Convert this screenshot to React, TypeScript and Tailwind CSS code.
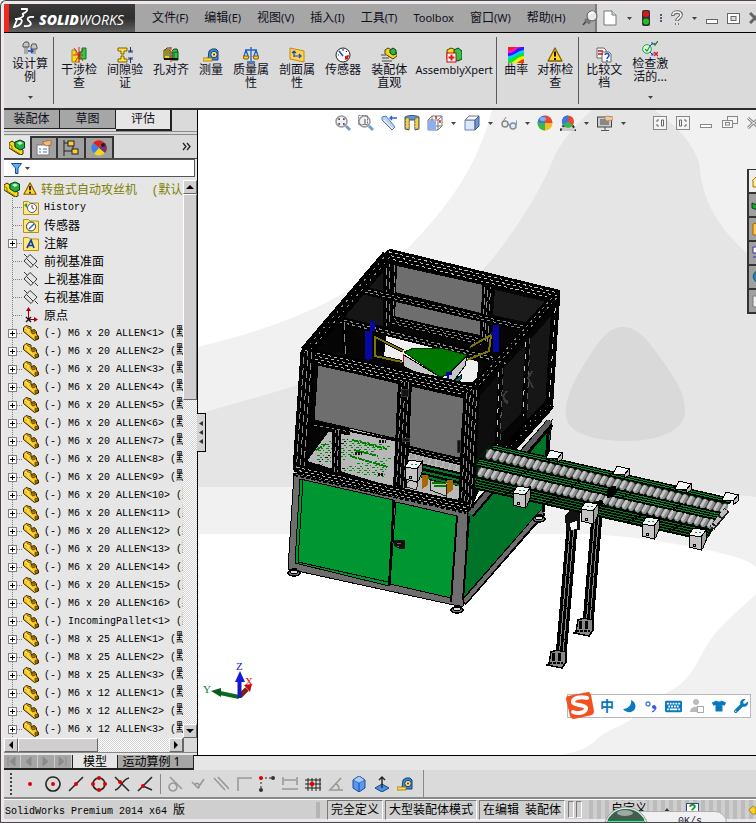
import React, { useState } from "react";
import { FaTshirt, FaWrench, FaMoon, FaKeyboard } from "react-icons/fa";

const UI_FONT = "font-['Noto_Sans','Noto_Sans_CJK_SC',sans-serif]";
const TREE_FONT = "font-['Liberation_Mono','Noto_Sans_CJK_SC',monospace]";

type Pt = [number, number];

const MENUS: [string, string][] = [
  ["文件", "(F)"],
  ["编辑", "(E)"],
  ["视图", "(V)"],
  ["插入", "(I)"],
  ["工具", "(T)"],
  ["", "Toolbox"],
  ["窗口", "(W)"],
  ["帮助", "(H)"],
];

const M6 = Array.from({ length: 16 }, (_, i) => `M6 x 20 ALLEN<${i + 1}>`);
const PARTS = [
  ...M6,
  "IncomingPallet<1>",
  "M8 x 25 ALLEN<1>",
  "M8 x 25 ALLEN<2>",
  "M8 x 25 ALLEN<3>",
  "M6 x 12 ALLEN<1>",
  "M6 x 12 ALLEN<2>",
  "M6 x 12 ALLEN<3>",
];

/* ---------- icons ---------- */

function Ico({ children, size = "size-4", box = "0 0 16 16" }: { children: React.ReactNode; size?: string; box?: string }) {
  return (
    <svg viewBox={box} className={`${size} shrink-0`} fill="none" aria-hidden="true">
      {children}
    </svg>
  );
}

const Caret = () => (
  <svg viewBox="0 0 5 3" className="h-[3px] w-[5px] shrink-0" fill="#444">
    <path d="M0 0H5L2.5 3Z" />
  </svg>
);

const BoltsIcon = () => (
  <Ico>
    <path d="M3 6V13M5 6V13M11 7V13M13 7V13" stroke="#777" />
    <path d="M1 3L3 1H6L7 3V6H1ZM9 6L10 3H14L15 6V8H9Z" fill="#c4c4c4" stroke="#555" />
    <path d="M6 10H11M9 8L11 10L9 12" stroke="#1646c8" strokeWidth="1.3" />
  </Ico>
);
const InterferenceIcon = () => (
  <Ico>
    <path d="M1 3H5V7H8V15H1Z" fill="#f7dc24" stroke="#a08a10" />
    <path d="M15 1H11V5H8V12H15Z" fill="#2fc64a" stroke="#0b7a20" />
    <path d="M3 1L12 14M12 2L4 15M8 0V16M2 8H12" stroke="#e01616" strokeWidth=".9" />
  </Ico>
);
const ClearanceIcon = () => (
  <Ico>
    <path d="M1 1H10V4H7V7H4V4H1ZM4 9H7V12H10V15H1V12H4Z" fill="#ffe14a" stroke="#7a6200" />
    <path d="M11 5H16M11 11H16M13.500 0V5M11.500 3L13.500 5L15.500 3M13.500 16V11M11.500 13L13.500 11L15.500 13" stroke="#15367f" />
  </Ico>
);
const HoleIcon = () => (
  <Ico>
    <path d="M1 3H7V12H1ZM2 3L4 1H8" fill="#e8d22a" stroke="#4a4200" />
    <path d="M9 5H15V13H9ZM9 4L11 2H14L15 5" fill="#31c240" stroke="#084d14" />
    <path d="M3 4V9M5 4V9M11 6V11" stroke="#444" />
    <path d="M8 0V16" stroke="#e01616" strokeDasharray="3 1" />
    <path d="M1 12H15" stroke="#111" strokeWidth="2" />
  </Ico>
);
const MeasureIcon = () => (
  <Ico>
    <path d="M5 12L6 4L9 2H13L15 4V13H5Z" fill="#3f88d8" stroke="#143e7a" />
    <circle cx="11" cy="7.500" r="3.200" fill="#ffe36b" stroke="#143e7a" />
    <circle cx="11" cy="7.500" r="1" fill="#143e7a" />
    <path d="M0 11H9V14H0Z" fill="#ffd83d" stroke="#8a6c00" strokeWidth=".7" />
  </Ico>
);
const MassIcon = () => (
  <Ico>
    <path d="M8 0V14M2 3H14M4 15H12M3 3L1 9M3 3L5 9M13 3L11 9M13 3L15 9" stroke="#1c62c4" strokeWidth="1.300" />
    <path d="M0 9H6L5 12H1ZM10 9H16L15 12H11Z" fill="#ffc928" stroke="#8a5a00" />
  </Ico>
);
const SectionIcon = () => (
  <Ico>
    <path d="M1 1L15 4V15L1 12Z" fill="#ffd34e" stroke="#c08a10" />
    <path d="M5 10V4M3 6L5 4L7 6M5 9H12M10 7L12 9L10 11" stroke="#1646c8" strokeWidth="1.200" />
  </Ico>
);
const SensorIcon = () => (
  <Ico>
    <circle cx="8" cy="8" r="7" fill="#fff" stroke="#222" />
    <path d="M8 9L4 4" stroke="#1646c8" strokeWidth="1.500" />
    <path d="M3 8H4M8 2V4M12 4L11 5" stroke="#222" />
    <path d="M10 9L14 8L13 12L10 13Z" fill="#e01616" />
  </Ico>
);
const AssemblyIcon = () => (
  <Ico>
    <path d="M0 4L3 2L6 4V7L14 11V15L11 16L0 9Z" fill="#f8d820" stroke="#3a3000" />
    <path d="M0 5L3 7V10M3 10L11 15" stroke="#8a7000" />
    <path d="M6 3L11 1L15.500 3V9L11 11L6 8Z" fill="#20b040" stroke="#063f12" />
    <path d="M8 4L11 2.500L14 4L11 6Z" fill="#c8f8d0" />
  </Ico>
);
const VisualizeIcon = () => (
  <Ico>
    <path d="M4 3L7 1L16 6V9L12 12L4 7Z" fill="#f3d322" stroke="#4a4000" />
    <path d="M9 3L12 1L15 3V7L12 8L9 6Z" fill="#2fb64a" stroke="#063f12" />
    <path d="M0 8H5M1 11H8M1 14H11" stroke="#777" strokeWidth="1.500" />
  </Ico>
);
const XpertIcon = () => (
  <Ico>
    <path d="M1 3L5 1L10 3V12H1Z" fill="#f8d820" stroke="#4a4000" />
    <path d="M8 3L12 1L16 4V12L12 14L8 12Z" fill="#2fc64a" stroke="#063f12" />
    <rect x="1" y="6" width="9" height="9" fill="#fff" stroke="#c00" />
    <path d="M5.500 7.500V13.500M2.500 10.500H8.500" stroke="#e01616" strokeWidth="2" />
  </Ico>
);
const CurvatureIcon = () => (
  <Ico>
    <path d="M0 0H16V16H0Z" fill="#f02020" />
    <path d="M0 3C5 4 6 0 11 0H16V16H0Z" fill="#ff10c8" />
    <path d="M0 6C6 7 7 1 14 0H16V16H0Z" fill="#3818ff" />
    <path d="M0 9C6 9 9 4 16 3V16H0Z" fill="#00d0ff" />
    <path d="M0 12C7 11 9 7 16 6V16H0Z" fill="#10e030" />
    <path d="M3 16C8 13 10 10 16 9V16Z" fill="#f8f000" />
    <path d="M9 16C11 14 13 13 16 12V16Z" fill="#ff3010" />
  </Ico>
);
const WarnIcon = ({ size }: { size?: string }) => (
  <Ico size={size}>
    <path d="M8 1L15 14H1Z" fill="#ffd62e" stroke="#8a5c00" strokeWidth="1.300" strokeLinejoin="round" />
    <path d="M8 4.500V9.500M8 11V13" stroke="#111" strokeWidth="2" />
  </Ico>
);
const CompareIcon = () => (
  <Ico>
    <path d="M1 1H8L10 3V11H1Z" fill="#fff" stroke="#666" />
    <path d="M6 5H13L15 7V15H6Z" fill="#fff" stroke="#666" />
    <path d="M2 4H7M2 7H7" stroke="#d01010" strokeWidth="1.500" />
    <path d="M9 8C9 6 13 6 13 8.500C13 10 11 10 11 12M11 13V14.500" stroke="#1646c8" strokeWidth="1.500" />
  </Ico>
);
const CheckActiveIcon = () => (
  <Ico>
    <circle cx="5" cy="8" r="4.300" fill="#e8ffe8" stroke="#18a038" />
    <path d="M3 8L5 10L8 5" stroke="#18a038" strokeWidth="1.300" />
    <path d="M8 5L11 2M9 2H11V4M8 11L11 14M9 14H11V12" stroke="#1646c8" />
    <path d="M12 2L13 4L16 0" stroke="#18801c" strokeWidth="1.300" />
    <path d="M12 11L16 15M16 11L12 15" stroke="#e01616" strokeWidth="1.300" />
  </Ico>
);
const PartIcon = () => (
  <Ico>
    <path d="M.5 3L3 .5L8 2V5.500L11.500 4.500L13.500 7V9L15.500 11.500V14L11.500 15.500L.5 6.500Z" fill="#f8c41a" stroke="#2e2200" strokeLinejoin="round" />
    <path d="M8 6.500L11.500 5.500L12.500 8L9.500 9ZM12 11.500L15 11V13.500L12 14.500Z" fill="#b87400" stroke="#3a2600" strokeWidth=".6" />
    <path d="M2 3L5 4V7.500L11 12" stroke="#fff08a" />
    <path d="M4 2.500L7 3.500" stroke="#8a5a00" />
  </Ico>
);
const FolderIcon = ({ children }: { children: React.ReactNode }) => (
  <Ico>
    <path d="M.5 2.500H5.500L7 4H15.500V15.500H.5Z" fill="#ffe97a" stroke="#b89018" />
    {children}
  </Ico>
);
const PlaneIcon = () => (
  <Ico>
    <path d="M1 8L7 1.500L14 8L8 14.500ZM4 6L10 12M1 1L4 4M12 12L15 15" stroke="#222" strokeWidth=".9" />
  </Ico>
);
const OriginIcon = () => (
  <Ico>
    <path d="M5.500 12V3M5.500 12.500H13" stroke="#900" strokeWidth="1" />
    <path d="M3 4L5.500 0L8 4ZM11 10L15 12.500L11 15Z" fill="#a00" />
    <path d="M3 10L8 15M8 10L3 15" stroke="#111" strokeWidth="1.300" />
  </Ico>
);
const BallIcon = () => (
  <Ico>
    <circle cx="8" cy="8" r="7.500" fill="#f0c020" />
    <path d="M8 8V.5A7.500 7.500 0 0 0 .5 8Z" fill="#3878e8" />
    <path d="M8 8H15.500A7.500 7.500 0 0 0 8 .5Z" fill="#e84838" />
    <path d="M8 8H.5A7.500 7.500 0 0 0 8 15.500Z" fill="#38b848" />
    <ellipse cx="6" cy="4" rx="3" ry="2" fill="#fff" opacity=".4" />
  </Ico>
);
const CubeIcon = () => (
  <Ico>
    <path d="M1 5H11V15H1Z" fill="#dce8fc" stroke="#7080a8" />
    <path d="M1 5L5 1H15L11 5Z" fill="#f4f8ff" stroke="#778" />
    <path d="M11 5L15 1V11L11 15Z" fill="#6a98e0" stroke="#4a5a88" />
  </Ico>
);

/* ---------- ribbon ---------- */

function Tool({ icon, label, high = false, caret = false }: { icon: React.ReactNode; label: string; high?: boolean; caret?: boolean }) {
  return (
    <button className={`flex shrink-0 flex-col items-center text-[12px] leading-[13px] text-[#10101c] ${high ? "pt-2" : "pt-[14px]"}`}>
      {icon}
      <span className="whitespace-pre">{label}</span>
      {caret && <span className="mt-[13px]"><Caret /></span>}
    </button>
  );
}

const Sep = () => <div className="my-1 w-px shrink-0 bg-[#5a5a5a]" />;

function Ribbon() {
  return (
    <div className="flex h-[77px] shrink-0 border-b-2 border-[#2c2c2c] bg-[#dadada] pl-2">
      <Tool high caret icon={<BoltsIcon />} label={"设计算\n例"} />
      <div className="flex gap-[7px] pl-[5px]">
        <Sep />
        <div className="flex gap-[10px]">
          <Tool icon={<InterferenceIcon />} label={"干涉检\n查"} />
          <Tool icon={<ClearanceIcon />} label={"间隙验\n证"} />
          <Tool icon={<HoleIcon />} label="孔对齐" />
          <Tool icon={<MeasureIcon />} label="测量" />
          <Tool icon={<MassIcon />} label={"质量属\n性"} />
          <Tool icon={<SectionIcon />} label={"剖面属\n性"} />
          <Tool icon={<SensorIcon />} label="传感器" />
          <Tool icon={<VisualizeIcon />} label={"装配体\n直观"} />
          <button className="flex w-[74px] shrink-0 flex-col items-center pt-[14px] text-[11px] leading-[13px] text-[#10101c]">
            <XpertIcon />
            AssemblyXpert
          </button>
        </div>
      </div>
      <div className="flex gap-[7px] pl-[5px]">
        <Sep />
        <div className="flex gap-[9px]">
          <Tool icon={<CurvatureIcon />} label="曲率" />
          <Tool icon={<WarnIcon />} label={"对称检\n查"} />
        </div>
      </div>
      <div className="flex gap-[7px] pl-[5px]">
        <Sep />
        <div className="flex gap-[10px]">
          <Tool icon={<CompareIcon />} label={"比较文\n档"} />
          <Tool high caret icon={<CheckActiveIcon />} label={"检查激\n活的..."} />
        </div>
      </div>
    </div>
  );
}

function MenuBar() {
  return (
    <header className="flex h-[29px] shrink-0 border-b border-black bg-[#dadada]">
      <div className="flex w-[131px] shrink-0 items-center border-l-[5px] border-[#f0281e] bg-linear-to-b from-[#3a3a3a] via-[#2e2e2e] to-[#606060] text-white">
        <svg viewBox="0 0 22 22" className="ml-1 size-[22px] shrink-0" fill="none" stroke="#fff" strokeWidth="1.800">
          <path d="M8 2H14C15 4 12 6 9 7M9 7C12 8 10 11 4 12" />
          <path d="M2 12H7C11 13 8 19 1 20L4 13" />
          <path d="M21 10C15 9 13 12 16 14C20 17 17 20 11 19" />
        </svg>
        <span className="ml-1 pt-1 font-['Open_Sans',sans-serif] text-[14px] leading-none italic">
          <b className="font-extrabold">SOLID</b>WORKS
        </span>
      </div>
      <nav className="flex w-[462px] shrink-0 items-center gap-4 border-r-2 border-[#7c7c7c] bg-[#a6a6a6] pl-[17px] text-[12px] text-[#10101c]">
        {MENUS.map(([label, key]) => (
          <button key={key} className="whitespace-nowrap">
            {label}
            <span className="text-[11px]">{key}</span>
          </button>
        ))}
        <Ico>
          <path d="M1 15L6 9" stroke="#444" strokeWidth="1.500" />
          <path d="M4 8L9 12L8 14H6L2 10Z" fill="#777" />
          <circle cx="10" cy="6" r="5" fill="#e8e8e8" stroke="#555" />
          <path d="M7 5C8 2 11 2 12 3" stroke="#fff" strokeWidth="2" />
        </Ico>
      </nav>
      <div className="flex min-w-0 flex-1 items-center gap-[9px] overflow-hidden pl-[5px]">
        <button aria-label="新建"><Ico><path d="M2 1H10L14 5V15H2Z" fill="#fff" stroke="#777" /><path d="M10 1V5H14" fill="#d8e0f0" stroke="#777" /></Ico></button>
        <Caret />
        <button aria-label="重建">
          <Ico size="h-4 w-[10px]" box="0 0 10 16">
            <rect x="1" width="8" height="16" rx="2" fill="#333" />
            <circle cx="5" cy="4" r="3" fill="#e01616" />
            <circle cx="5" cy="11.500" r="3" fill="#20c020" />
          </Ico>
        </button>
        <span className="h-2 border-l-2 border-dotted border-[#4a6080]" />
        <button aria-label="帮助">
          <Ico size="h-4 w-3" box="0 0 12 16">
            <path d="M2 6C1 1 11 1 10 5C10 8 6 8 6 11M6 13V15" stroke="#666" strokeWidth="3.600" />
            <path d="M2 5C2 1 10 1 10 5C10 8 6 8 6 10.500M6 13V15" stroke="#fff" strokeWidth="1.600" />
          </Ico>
        </button>
        <Caret />
        <button aria-label="最小化"><Ico size="h-4 w-3" box="0 0 12 16"><rect x=".5" y="9.500" width="11" height="4" fill="#fff" stroke="#666" /></Ico></button>
        <button aria-label="最大化"><Ico size="h-[11px] w-[13px]" box="0 0 13 11"><rect x=".5" y=".5" width="12" height="10" fill="#fff" stroke="#666" /><rect x="4" y="3.500" width="5" height="4" fill="#ddd" stroke="#666" /></Ico></button>
        <button aria-label="关闭"><Ico size="size-3" box="0 0 12 12"><path d="M1 1L11 11M11 1L1 11" stroke="#666" strokeWidth="3" /></Ico></button>
      </div>
    </header>
  );
}

/* ---------- feature tree ---------- */

function Branch({ box = false }: { box?: boolean }) {
  return (
    <svg viewBox="0 0 19 18" className="h-[18px] w-[19px] shrink-0" fill="none" shapeRendering="crispEdges">
      <path d="M8.500 0V18M8.500 9.500H19" stroke="#808080" strokeDasharray="1 1" />
      {box && (
        <>
          <rect x="4.500" y="5.500" width="8" height="8" fill="#fff" stroke="#808080" />
          <path d="M6 9.500H11M8.500 7V12" stroke="#000" />
        </>
      )}
    </svg>
  );
}

function Node({ icon, children, box = false, cjk = false }: { icon: React.ReactNode; children: React.ReactNode; box?: boolean; cjk?: boolean }) {
  return (
    <li className="flex h-[18px] items-center whitespace-nowrap">
      <Branch box={box} />
      {icon}
      <span className={cjk ? "ml-[5px] pt-[3px] text-[12px]" : "ml-[5px] text-[12px]"}>{children}</span>
    </li>
  );
}

const track = "bg-[repeating-conic-gradient(#ffffff_0_25%,#d2d2d2_0_50%)] bg-[length:2px_2px]";
const raised = "border border-t-white border-l-white border-r-[#666] border-b-[#666] bg-[#d0cece]";

function ScrollBtn({ d, label }: { d: string; label: string }) {
  return (
    <button aria-label={label} className={`flex size-[14px] shrink-0 items-center justify-center ${raised}`}>
      <svg viewBox="0 0 8 8" className="size-2" fill="#000"><path d={d} /></svg>
    </button>
  );
}

function FeaturePanel() {
  const [tab, setTab] = useState(2);
  const [filter, setFilter] = useState("");

  return (
    <aside className="relative flex w-[194px] shrink-0 flex-col border-r border-black bg-[#e6e6e6]">
      <div className="flex h-[21px] shrink-0 bg-[#dadada] text-[12px] text-[#10101c]">
        {["装配体", "草图", "评估"].map((t, i) => (
          <button
            key={t}
            onClick={() => setTab(i)}
            className={i === tab ? "h-[21px] w-[56px] border-r-2 border-b-2 border-[#222] bg-[#e6e6e6] pb-1" : "h-[19px] w-[56px] border-r border-b border-[#222] bg-[#a6a6a6] pb-px leading-none"}
          >
            {t}
          </button>
        ))}
      </div>
      <div className="h-1 shrink-0 border-y border-[#8a8a8a] bg-[#dadada]" />
      <div className="flex h-[24px] shrink-0 items-end border-b border-[#444] bg-[#dadada]">
        <button aria-label="设计树" className="flex h-[22px] w-[26px] items-center justify-center bg-[#e6e6e6]"><AssemblyIcon /></button>
        <button aria-label="属性" className="flex h-[22px] w-7 items-center justify-center border-2 border-b-0 border-[#333] bg-[#a0a0a0]">
          <Ico><rect x="1" y="5" width="12" height="10" fill="#fff" stroke="#777" /><path d="M3 9H5M7 9H11M3 12H5M7 12H11" stroke="#4a6cc0" /><path d="M6 2L15 0V5L10 6L8 4Z" fill="#f4b870" stroke="#8a5820" strokeWidth=".6" /></Ico>
        </button>
        <button aria-label="配置" className="flex h-[22px] w-7 items-center justify-center border-2 border-b-0 border-l-0 border-[#333] bg-[#a0a0a0]">
          <Ico><path d="M1 0V16M1 3H6M1 11H10M10 5V9" stroke="#222" /><rect x="5" y="1" width="6" height="5" fill="#f8d030" stroke="#222" /><rect x="9" y="9" width="6" height="5" fill="#f8d030" stroke="#222" /></Ico>
        </button>
        <button aria-label="外观" className="flex h-[22px] w-7 items-center justify-center border-2 border-b-0 border-l-0 border-[#333] bg-[#a0a0a0]">
          <Ico><circle cx="8" cy="8" r="7.500" fill="#f0d820" /><path d="M8 8L2 3A7.500 7.500 0 0 1 12 1.500Z" fill="#e02020" /><path d="M8 8L12 1.500A7.500 7.500 0 0 1 14 13Z" fill="#803070" /><path d="M8 8L2 3A7.500 7.500 0 0 0 3 13.500Z" fill="#3880f0" /><circle cx="12" cy="5" r="2" fill="#222" /></Ico>
        </button>
        <button aria-label="更多" className="mr-[6px] mb-[7px] ml-auto">
          <svg viewBox="0 0 9 9" className="size-[9px]" fill="none" stroke="#222" strokeWidth="1.300"><path d="M1 1L4 4.500L1 8M5 1L8 4.500L5 8" /></svg>
        </button>
      </div>
      <label className="mr-[2px] flex h-[18px] shrink-0 items-center border border-l-0 border-[#555] bg-white pl-[7px]">
        <Ico size="size-[11px]" box="0 0 11 11"><path d="M.5 .5H10.500L7 5V10.500H4.500V5Z" fill="#5ab4f4" stroke="#1048a0" /></Ico>
        <span className="ml-[3px]"><Caret /></span>
        <input aria-label="过滤" value={filter} onChange={(e) => setFilter(e.target.value)} className="ml-1 h-3 min-w-0 flex-1 text-[12px] outline-none" />
      </label>

      <div className="mt-[3px] flex min-h-0 flex-1">
        <ul className={`min-w-0 flex-1 overflow-hidden text-[#000] ${TREE_FONT}`}>
          <li className="flex h-[18px] items-center whitespace-nowrap text-[#808000]">
            <AssemblyIcon />
            <span className="ml-[3px]"><WarnIcon size="size-[14px]" /></span>
            <span className="ml-1 pt-[3px] text-[12px] whitespace-pre">转盘式自动攻丝机  (默认</span>
          </li>
          <Node icon={<FolderIcon><circle cx="9" cy="9" r="4.500" fill="#fff" stroke="#2868c0" /><path d="M9 6V9L11 10" stroke="#c02020" /><path d="M1 6L4 4V9Z" fill="#20a030" /></FolderIcon>}>
            <span className="text-[10px]">History</span>
          </Node>
          <Node cjk icon={<FolderIcon><circle cx="8" cy="9.500" r="4.500" fill="#fff" stroke="#333" /><path d="M6 12L11 7" stroke="#2868c0" strokeWidth="1.500" /></FolderIcon>}>传感器</Node>
          <Node cjk box icon={<FolderIcon><path d="M4 13L8 5L11 13M5 10.500H10" stroke="#1040b0" strokeWidth="1.700" /></FolderIcon>}>注解</Node>
          <Node cjk icon={<PlaneIcon />}>前视基准面</Node>
          <Node cjk icon={<PlaneIcon />}>上视基准面</Node>
          <Node cjk icon={<PlaneIcon />}>右视基准面</Node>
          <Node cjk icon={<OriginIcon />}>原点</Node>
          {PARTS.map((p) => (
            <Node key={p} box icon={<PartIcon />}>
              <span className="text-[10px] whitespace-pre">(-) {p} (</span>默
            </Node>
          ))}
        </ul>
        <div className={`flex w-[14px] shrink-0 flex-col ${track}`}>
          <ScrollBtn label="向上" d="M0 6L4 2L8 6Z" />
          <div className={`h-[206px] ${raised}`} />
          <div className="flex-1" />
          <ScrollBtn label="向下" d="M0 2L4 6L8 2Z" />
        </div>
      </div>
      <div className={`flex h-[14px] shrink-0 ${track}`}>
        <ScrollBtn label="向左" d="M6 0L2 4L6 8Z" />
        <div className={`w-20 ${raised}`} />
        <div className="flex-1" />
        <ScrollBtn label="向右" d="M2 0L6 4L2 8Z" />
        <div className="size-[14px] border-l border-[#666] bg-[#dadada]" />
      </div>
      <div className="h-[3px] shrink-0 border-t border-[#888] bg-[#e6e6e6]" />
      {/* splitter grip hangs over the graphics area */}
      <button aria-label="折叠" className="absolute top-[303px] left-[193px] z-10 flex h-[39px] w-[9px] flex-col items-center justify-center gap-1 border border-l-0 border-black bg-[#d4d4d4]">
        {[0, 1, 2].map((i) => (
          <svg key={i} viewBox="0 0 4 5" className="h-[5px] w-1" fill="#333"><path d="M4 0V5L0 2.500Z" /></svg>
        ))}
      </button>
    </aside>
  );
}

/* ---------- 3D model ---------- */

const pts = (p: Pt[]) => p.map((q) => q.join(",")).join(" ");

// aluminium profile: a thick black bar with dashed highlights running along it
function Beam({ a, b, w, n = 2, hi = "#8c8c8c", dash = "3 3" }: { a: Pt; b: Pt; w: number; n?: number; hi?: string; dash?: string }) {
  const len = Math.hypot(b[0] - a[0], b[1] - a[1]);
  const nx = -(b[1] - a[1]) / len;
  const ny = (b[0] - a[0]) / len;
  return (
    <g>
      <line x1={a[0]} y1={a[1]} x2={b[0]} y2={b[1]} stroke="#000" strokeWidth={w} />
      {Array.from({ length: n }, (_, i) => {
        const o = ((i + 1) / (n + 1) - 0.5) * w;
        return (
          <line key={i} x1={a[0] + nx * o} y1={a[1] + ny * o} x2={b[0] + nx * o} y2={b[1] + ny * o} stroke={hi} strokeWidth="1" strokeDasharray={dash} strokeDashoffset={i * 3} />
        );
      })}
    </g>
  );
}

function Bracket({ x, y, low = false }: { x: number; y: number; low?: boolean }) {
  return low ? (
    <g stroke="#000" strokeWidth="1">
      <path d={`M${x} ${y + 7}L${x + 4} ${y}L${x + 17} ${y + 2}L${x + 12} ${y + 9}Z`} fill="#f4f4f4" />
      <path d={`M${x} ${y + 7}L${x + 12} ${y + 9}V${y + 22}L${x} ${y + 19}Z`} fill="#c4c4c4" />
      <path d={`M${x + 12} ${y + 9}L${x + 17} ${y + 2}V${y + 12}L${x + 14} ${y + 20}H${x + 12}Z`} fill="#a0a0a0" />
      <path d={`M${x + 6} ${y + 4}H${x + 12}`} stroke="#00a030" strokeDasharray="2 2" />
      <rect x={x + 4} y={y + 16} width="2" height="2" />
    </g>
  ) : (
    <g stroke="#000" strokeWidth="1">
      <path d={`M${x} ${y + 8}L${x + 4} ${y}L${x + 16} ${y + 3}L${x + 11} ${y + 9}Z`} fill="#f4f4f4" />
      <path d={`M${x + 11} ${y + 9}L${x + 16} ${y + 3}V${y + 9}L${x + 11} ${y + 13}Z`} fill="#bbb" />
    </g>
  );
}

function Rollers({ a, b }: { a: Pt; b: Pt }) {
  const n = 36;
  return (
    <g shapeRendering="auto">
      <line x1={a[0]} y1={a[1]} x2={b[0]} y2={b[1]} stroke="#4c5450" strokeWidth="7" />
      {Array.from({ length: n }, (_, i) => {
        const x = a[0] + ((b[0] - a[0]) * (i + 0.5)) / n;
        const y = a[1] + ((b[1] - a[1]) * (i + 0.5)) / n;
        return (
          <g key={i} strokeLinecap="round">
            <path d={`M${x - 1} ${y + 3}L${x + 2} ${y - 2}`} stroke="#8e8e8e" strokeWidth="5" />
            <path d={`M${x - 2} ${y + 2}L${x + 1} ${y - 3}`} stroke="#c6c6c6" strokeWidth="3" />
          </g>
        );
      })}
    </g>
  );
}

function Leg({ a, b }: { a: Pt; b: Pt }) {
  const [x, y] = b;
  return (
    <g>
      <Beam a={a} b={b} w={11} n={2} hi="#8a8a8a" dash="30 1" />
      <path d={`M${x - 12} ${y + 8}L${x - 10} ${y - 4}L${x - 4} ${y - 6}L${x + 5} ${y - 4}V${y + 6}L${x + 1} ${y + 12}L${x - 14} ${y + 9}Z`} fill="#888" stroke="#000" strokeWidth="1.500" />
      <path d={`M${x - 8} ${y - 3}V${y + 5}M${x - 2} ${y - 3}V${y + 5}`} stroke="#000" strokeWidth="3" />
      <path d={`M${x - 12} ${y + 7}H${x + 2}`} stroke="#000" strokeWidth="2" strokeDasharray="3 1" />
    </g>
  );
}

function Foot({ x, y }: { x: number; y: number }) {
  return (
    <g stroke="#000">
      <path d={`M${x} ${y - 5}V${y}`} strokeWidth="5" />
      <ellipse cx={x} cy={y} rx="6" ry="3" fill="#777" strokeWidth="1.500" />
      <ellipse cx={x} cy={y - 1} rx="4" ry="1.500" fill="#ddd" />
    </g>
  );
}

// scattered holes and green marks on the table top
const SPECKS = Array.from({ length: 150 }, (_, i) => {
  const u = ((i * 37) % 101) / 101;
  const v = ((i * 61) % 97) / 97;
  return { x: 322 + u * 70 - v * 8, y: 434 + v * 32 + u * 12, w: 1 + ((i * 7) % 3) };
});

function Machine() {
  return (
    <g shapeRendering="crispEdges">
      {/* cabinet, right side */}
      <polygon points={pts([[467, 515], [552, 420], [543, 511], [463, 604]])} fill="#007428" stroke="#000" />
      <path d="M463 603L543 512" stroke="#000" strokeWidth="7" />
      <path d="M464 602L543 511" stroke="#6e6e6e" strokeWidth="4" />
      <path d="M549 420L543 512" stroke="#000" strokeWidth="3" />
      {/* enclosure */}
      <polygon points={pts([[388, 250], [560, 291], [552, 409], [478, 492], [467, 516], [294, 471], [302, 350]])} fill="#050505" stroke="#000" />
      <polygon points={pts([[383, 273], [383, 326], [346, 318], [352, 303]])} fill="#161616" />
      <polygon points={pts([[397, 266], [483, 285], [481, 313], [395, 292]])} fill="#6e6e6e" />
      <polygon points={pts([[395, 300], [481, 320], [481, 335], [395, 318]])} fill="#6e6e6e" />
      <polygon points={pts([[495, 290], [547, 302], [525, 322], [493, 315]])} fill="#1b1b1b" />
      <polygon points={pts([[386, 336], [420, 342], [478, 362], [477, 382], [440, 382], [402, 362], [384, 358]])} fill="#efefef" />
      <Beam a={[388, 260]} b={[388, 326]} w={8} n={2} dash="7 4" />
      <Beam a={[395, 265]} b={[393, 322]} w={4} n={1} dash="7 4" />
      <Beam a={[488, 282]} b={[485, 342]} w={11} n={3} dash="7 4" />
      <Beam a={[393, 321]} b={[482, 342]} w={10} n={3} />
      <Beam a={[388, 255]} b={[557, 296]} w={13} n={3} hi="#c0c0c0" />
      <Beam a={[362, 290]} b={[530, 329]} w={8} n={2} />
      <Beam a={[338, 320]} b={[506, 362]} w={8} n={2} />
      <Beam a={[388, 256]} b={[306, 352]} w={13} n={2} dash="2 5" />
      <Beam a={[344, 322]} b={[346, 362]} w={5} n={1} dash="8 4" />
      {/* turntable */}
      <polygon points={pts([[404, 355], [440, 377], [432, 380], [403, 366]])} fill="#c6c6c6" stroke="#000" />
      <polygon points={pts([[467, 356], [447, 376], [452, 383], [465, 366]])} fill="#c6c6c6" stroke="#000" />
      <polygon points={pts([[404, 352], [414, 348], [440, 348], [467, 355], [447, 375], [440, 377]])} fill="#007800" stroke="#003000" />
      <path d="M403 351L375 337V356L402 362" stroke="#000" strokeWidth="4" fill="none" />
      <path d="M403 351L375 337V356L402 362M470 347L491 335L489 351L467 360" stroke="#7c7600" strokeWidth="2" fill="none" />
      <path d="M403 354V362M445 378V382" stroke="#c00000" strokeWidth="1" />
      <path d="M365 331H372V359H365ZM370 321H375V331H370ZM367 352H369V364H367ZM493 325H499V352H493ZM491 332H493V335H491ZM446 372H452V375H446ZM447 375H449V382H447Z" fill="#0808a0" />
      <path d="M454 381L461 375V379L456 384Z" fill="#008020" stroke="#001040" />
      {/* right wall */}
      <polygon points={pts([[478, 398], [498, 375], [495, 441], [475, 462]])} fill="#0e0e0e" />
      <polygon points={pts([[504, 368], [525, 345], [521, 413], [500, 435]])} fill="#141414" />
      <polygon points={pts([[530, 340], [553, 314], [548, 402], [527, 420]])} fill="#161616" />
      <path d="M499 372L497 446M526 342L523 416" stroke="#c8c8c8" strokeDasharray="5 7" fill="none" />
      <path d="M503 368L500 440M530 338L527 412" stroke="#5a5a5a" strokeDasharray="6 5" fill="none" />
      <path d="M507 391L503 396L506 403M532 371L528 378L533 388M507 400V404" stroke="#3a3a3a" strokeWidth="2" fill="none" />
      <Beam a={[556, 296]} b={[549, 407]} w={8} n={1} hi="#d8d8d8" dash="5 7" />
      <Beam a={[476, 386]} b={[556, 296]} w={10} n={2} dash="2 4" />
      <Beam a={[478, 478]} b={[550, 403]} w={10} n={2} dash="1 6" />
      <path d="M470 514L550 423" stroke="#000" strokeWidth="9" />
      <path d="M470 514L550 421" stroke="#5e5e5e" strokeWidth="5" />
      {/* table top through the front opening */}
      <polygon points={pts([[330, 430], [348, 428], [396, 440], [460, 458], [460, 500], [396, 488], [307, 461]])} fill="#b8b8b8" />
      {SPECKS.map((s, i) => (
        <rect key={i} x={s.x} y={s.y} width={s.w} height="1" fill={i % 11 ? "#008a10" : "#111"} />
      ))}
      <path d="M352 440L387 449M350 456L388 467M354 450L378 456M316 450L326 444" stroke="#007c00" strokeWidth="2" strokeDasharray="7 1" />
      <path d="M379 441H386M355 453H362M378 474H384" stroke="#111" strokeWidth="3" strokeDasharray="2 1" />
      <path d="M404 486L412 478L418 484L416 490ZM430 480L446 484V496L430 490Z" fill="#c4c4c4" stroke="#222" />
      <path d="M432 483H446M434 486H446" stroke="#007c00" strokeWidth="2" />
      {/* incoming lane */}
      <path d="M410 456L480 474" stroke="#a4a4a4" strokeWidth="5" strokeDasharray="5 2" />
      <path d="M415 469L480 484" stroke="#000" strokeWidth="14" />
      <path d="M415 465L480 480M415 470L480 485M418 475L480 490" stroke="#007c28" strokeWidth="2" />
      <path d="M422 475H428V485L422 489ZM447 480H453V490L447 494Z" fill="#a86800" />
      {/* front wall */}
      <polygon points={pts([[318, 364], [400, 384], [398, 439], [314, 420]])} fill="#6e6e6e" stroke="#000" />
      <polygon points={pts([[411, 386], [464, 398], [460, 458], [409, 447]])} fill="#6e6e6e" stroke="#000" />
      <Beam a={[308, 424]} b={[350, 432]} w={7} n={1} />
      <path d="M350 431L398 441" stroke="#000" strokeWidth="2" />
      <Beam a={[408, 449]} b={[466, 463]} w={7} n={2} />
      <Beam a={[337, 430]} b={[336, 472]} w={9} n={2} dash="6 4" />
      <Beam a={[304, 355]} b={[474, 392]} w={15} n={4} hi="#b4b4b4" />
      <Beam a={[308, 352]} b={[300, 470]} w={15} n={3} dash="7 4" />
      <Beam a={[405, 382]} b={[400, 488]} w={14} n={3} dash="7 4" />
      <Beam a={[472, 390]} b={[466, 508]} w={16} n={4} dash="7 4" />
      <Beam a={[296, 470]} b={[468, 508]} w={11} n={3} hi="#b4b4b4" />
      <path d="M401 389H408V396H401ZM402 438H409V441H402ZM457 440H460V452H457Z" fill="#111" stroke="#333" />
      {/* cabinet, front */}
      <polygon points={pts([[294, 473], [468, 512], [463, 607], [288, 569]])} fill="#6e6e6e" stroke="#000" />
      <path d="M294 475L466 513" stroke="#000" strokeWidth="2" strokeDasharray="4 2" />
      <polygon points={pts([[300, 479], [393, 500], [389, 586], [295, 563]])} fill="#009632" stroke="#000" />
      <path d="M302 476L392 497M303 480L298 562L388 582" stroke="#000" fill="none" />
      <polygon points={pts([[396, 502], [457, 516], [451, 598], [390, 584]])} fill="#009632" stroke="#000" />
      <path d="M394 500L389 585" stroke="#000" strokeWidth="2" />
      <path d="M394 540H405V549H400L394 546Z" fill="#111" />
      <path d="M397 543H401M397 546H399" stroke="#666" />
      <path d="M457 516L451 602M469 516L463 600" stroke="#000" strokeWidth="2" />
      <Foot x={294} y={573} />
      <Foot x={457} y={610} />
      <Foot x={539} y={519} />
      {/* support legs */}
      <Leg a={[597, 515]} b={[588, 624]} />
      <Leg a={[573, 516]} b={[561, 656]} />
      <path d="M565 515L572 509L580 513V530L566 531Z" fill="#111" />
      <path d="M570 523L577 521V529L571 530Z" fill="#f4f4f4" />
      {/* conveyor */}
      <polygon points={pts([[489, 445], [730, 502], [708, 538], [476, 488], [476, 460]])} fill="#041a0a" />
      <Rollers a={[486, 453]} b={[727, 509]} />
      <Rollers a={[478, 471]} b={[714, 524]} />
      <Beam a={[493, 447]} b={[731, 501]} w={6} n={2} hi="#008c30" dash="60 2" />
      <Beam a={[478, 462]} b={[722, 517]} w={9} n={3} hi="#008c30" dash="50 2" />
      <Beam a={[476, 483]} b={[708, 535]} w={13} n={4} hi="#007c28" dash="40 2" />
      <path d="M727 510L712 528" stroke="#222" strokeWidth="6" />
      <path d="M726 510L712 527" stroke="#bdbdbd" strokeWidth="4" strokeDasharray="8 2" />
      <path d="M607 490L615 486L617 492L608 498ZM594 503L601 500L604 504Z" fill="#000" stroke="#000" />
      <Bracket x={546} y={450} />
      <Bracket x={613} y={466} />
      <Bracket x={675} y={481} />
      <Bracket x={722} y={492} />
      <Bracket low x={405} y={460} />
      <Bracket low x={513} y={486} />
      <Bracket low x={581} y={502} />
      <Bracket low x={642} y={517} />
      <Bracket low x={689} y={528} />
    </g>
  );
}

function Triad() {
  return (
    <g className="font-['Liberation_Serif',serif] text-[11px]">
      <path d="M239 697L220 693" stroke="#0a6a20" strokeWidth="4" />
      <path d="M211 691L221 688V697Z" fill="#0a5a1c" />
      <path d="M240 696L247 689" stroke="#7a2010" strokeWidth="5" />
      <path d="M244 685L252 684L250 692Z" fill="#c01010" />
      <path d="M239.500 698V680" stroke="#1818c0" strokeWidth="4" />
      <path d="M235 682L240 671L245 682Z" fill="#1818e0" />
      <text x="236" y="670" fill="#1010e0">Z</text>
      <text x="203" y="693" fill="#008020">Y</text>
      <text x="245" y="685" fill="#e01010">X</text>
    </g>
  );
}

function Scene() {
  return (
    <svg viewBox="198 110 558 645" preserveAspectRatio="xMinYMin slice" className="absolute inset-0 h-full w-full" fill="none">
      <rect x="198" y="110" width="1200" height="1200" fill="#fff" />
      <path d="M492 110C478 165 450 205 408 248C350 295 300 322 198 347V534H589C640 537 700 546 742 559C766 568 764 584 756 594C730 618 718 628 707 645C695 664 692 684 657 697C640 708 640 718 615 728C590 738 600 748 560 755H1400V110Z" fill="#f1f1f1" />
      <path d="M592 110C570 130 560 145 554 157C545 182 520 225 493 258C450 310 380 362 301 384C270 394 230 405 198 414V487H620C680 487 730 495 760 497V264C725 237 702 205 700 168C695 140 670 122 655 110Z" fill="#e5e5e5" />
      <path d="M592 352C604 334 612 327 623 327C636 327 644 336 656 352C676 378 686 396 685 412C684 430 660 441 626 441C590 441 568 432 566 416C564 398 576 376 592 352Z" fill="#d9d9d9" />
      <Machine />
      <Triad />
    </svg>
  );
}

/* ---------- graphics area ---------- */

const Lens = ({ children }: { children?: React.ReactNode }) => (
  <Ico>
    <circle cx="6.500" cy="6.500" r="5.500" fill="#eef2f6" stroke="#999" strokeWidth="1.500" />
    <path d="M11 11L15 15" stroke="#6a9cdc" strokeWidth="2.800" />
    {children}
  </Ico>
);

function HudBar() {
  return (
    <div className="absolute top-[5px] right-0 left-[137px] flex items-center gap-[7px] overflow-hidden">
      <button aria-label="整屏显示"><Lens><path d="M4 5V4H5M8 4H9V5M9 8V9H8M5 9H4V8" stroke="#444" strokeWidth="1.300" /></Lens></button>
      <button aria-label="局部放大"><Lens><rect x=".5" y=".5" width="9" height="9" stroke="#777" strokeDasharray="2 1" /><path d="M7 4V8M6 9H8" stroke="#555" /></Lens></button>
      <button aria-label="上一视图"><Ico><path d="M1 2L5 1L14 12L11 15L1 5Z" fill="#b8d4f0" stroke="#5a7ca8" /><path d="M3 5L12 14" stroke="#fff" /><path d="M16 3H9M11 1L9 3L11 5" stroke="#3060d0" strokeWidth="1.300" /></Ico></button>
      <button aria-label="剖面视图"><Ico><path d="M1 2C4 0 12 0 15 2V14L11 15V5H5V15L1 14Z" fill="#5a94e0" stroke="#555" /><path d="M1.500 3H5V14H1.500ZM11 3H14.500V14H11Z" fill="#f4d050" stroke="#665010" strokeWidth=".6" strokeDasharray="2 1" /></Ico></button>
      <div className="flex items-center gap-2">
        <button aria-label="视图定向"><Ico><path d="M5 1H15V11H5ZM1 5H11V15H1ZM1 5L5 1M11 5L15 1M11 15L15 11" stroke="#777" /><path d="M1 6H9V15H1Z" fill="#8cb0f0" /><path d="M9 1V4M13 5V8" stroke="#e02020" strokeWidth="1.500" /></Ico></button>
        <Caret />
      </div>
      <div className="ml-px flex items-center gap-2"><button aria-label="显示样式"><CubeIcon /></button><Caret /></div>
      <div className="ml-px flex items-center gap-2">
        <button aria-label="隐藏项目"><Ico><circle cx="4" cy="9" r="3" fill="#eee" stroke="#888" strokeWidth="1.500" /><circle cx="12" cy="11" r="3" fill="#dde8f8" stroke="#8090a8" strokeWidth="1.500" /><path d="M1 8L5 2M7 9L9 10M15 10L16 5" stroke="#888" /></Ico></button>
        <Caret />
      </div>
      <button aria-label="编辑外观"><BallIcon /></button>
      <div className="flex items-center gap-2">
        <button aria-label="应用布景"><Ico><path d="M0 16L3 11H13L16 16" fill="#ccc" stroke="#333" strokeWidth="2" strokeDasharray="3 2" /><circle cx="8" cy="6.500" r="6" fill="#e84838" /><path d="M8 6.500L8 .5A6 6 0 0 0 3 10Z" fill="#3878e8" /><path d="M8 6.500L3 10A6 6 0 0 0 13 10Z" fill="#38b848" /></Ico></button>
        <Caret />
      </div>
      <div className="ml-px flex items-center gap-2">
        <button aria-label="视图设定"><Ico><rect x=".5" y="2" width="14" height="10" fill="#ccc" stroke="#444" /><path d="M3 4H12V10H3Z" fill="#888" /><path d="M7 3L10 1L16 2V5L10 6Z" fill="#f0c8a0" stroke="#a87848" strokeWidth=".6" /><path d="M8 12V15M4 15.500H12" stroke="#555" /></Ico></button>
        <Caret />
      </div>
      <div className="ml-[20px] flex items-center gap-[9px]">
        <button aria-label="左窗格"><Ico size="size-[14px]" box="0 0 14 14"><rect x=".5" y=".5" width="13" height="13" fill="#f4f4f4" stroke="#888" /><path d="M6 4H4V6M4 8V10H6M8.500 4H10.500V10H8.500Z" stroke="#666" /></Ico></button>
        <button aria-label="右窗格"><Ico size="size-[14px]" box="0 0 14 14"><rect x=".5" y=".5" width="13" height="13" fill="#f4f4f4" stroke="#888" /><path d="M8 4H10V6M10 8V10H8M3.500 4H5.500V10H3.500Z" stroke="#666" /></Ico></button>
        <button aria-label="最小化文档"><Ico size="size-[14px]" box="0 0 14 14"><rect x="1.500" y="8.500" width="11" height="3" fill="#fff" stroke="#888" /></Ico></button>
        <button aria-label="还原文档"><Ico><rect x="5.500" y="1.500" width="10" height="7" fill="#f4f4f4" stroke="#888" /><rect x=".5" y="5.500" width="10" height="7" fill="#f4f4f4" stroke="#888" /><rect x="3.500" y="7.500" width="4" height="2.500" stroke="#888" /></Ico></button>
        <button aria-label="关闭文档"><Ico size="size-[14px]" box="0 0 14 14"><path d="M1 2L12 12M12 2L1 12" stroke="#888" strokeWidth="3" /><path d="M1 2L12 12M12 2L1 12" stroke="#fff" /></Ico></button>
      </div>
    </div>
  );
}

const TASKS = [
  <path key="h" d="M0 8L6 2V8M1 8V14H8V6" fill="#ffe9a0" stroke="#a87800" />,
  <path key="l" d="M0 6L8 9V14L0 11Z" fill="#20a030" stroke="#063f12" />,
  <path key="f" d="M1 3L8 1V14H1Z" fill="#ffc848" stroke="#a06800" />,
  <path key="v" d="M1 2H8V8H1ZM1 12H8" fill="#fff" stroke="#3030a0" />,
  <path key="a" d="M8 1C-1 2 -1 13 8 14Z" fill="#2878d0" stroke="#106030" />,
  <path key="c" d="M1 3H8V14H1Z" fill="#f0f0f0" stroke="#777" />,
];

function SogouBar() {
  return (
    <div className="absolute right-[5px] bottom-[37px] flex h-[24px] w-[184px] items-center gap-2 border border-[#b8b8b8] bg-white pl-[32px] text-[#0878c0]">
      <svg viewBox="0 0 28 28" className="absolute -top-[4px] -left-[2px] size-7">
        <path d="M2 5L22 1C24 1 24 2 25 4L28 20C28 22 27 23 26 24L8 28C6 28 5 27 4 25L0 8C0 6 1 5 2 5Z" fill="#f4511e" />
        <path d="M21 7C14 5 7 7 7 11C7 15 21 13 20 18C19 22 12 23 7 21" fill="none" stroke="#fff" strokeWidth="4" strokeLinecap="round" />
      </svg>
      <button className="text-[14px] leading-none font-bold">中</button>
      <button aria-label="半角"><Ico size="size-[14px]" box="0 0 14 14"><path d="M9 1C10 6 6 10 1 10C5 15 13 14 13.500 7.500C13.500 4 11.500 2 9 1Z" fill="#0878c0" /></Ico></button>
      <button aria-label="标点"><Ico size="h-[14px] w-[13px]" box="0 0 13 14"><circle cx="4" cy="5" r="2" stroke="#3a78e8" strokeWidth="1.300" /><circle cx="10" cy="8" r="2" fill="#3a58e0" /><path d="M12 8C12 11 10 12 8 13" stroke="#3a58e0" strokeWidth="1.300" /></Ico></button>
      <button aria-label="软键盘"><FaKeyboard className="size-[17px]" /></button>
      <button aria-label="账户"><Ico size="size-[14px]" box="0 0 14 14"><circle cx="6" cy="3" r="3" fill="#bbb" /><path d="M0 13C0 6 12 6 12 13Z" fill="#bbb" /><rect x="7.500" y="7.500" width="6" height="6" fill="#fff" stroke="#aaa" /></Ico></button>
      <button aria-label="皮肤"><FaTshirt className="size-[14px]" /></button>
      <button aria-label="工具箱"><FaWrench className="size-[14px]" /></button>
    </div>
  );
}

function GraphicsArea() {
  return (
    <main className="relative min-w-0 flex-1 overflow-hidden bg-white">
      <Scene />
      <HudBar />
      <div className="absolute top-[59px] right-0 w-[9px] border-t border-l-2 border-[#333]">
        {TASKS.map((t, i) => (
          <button key={i} aria-label={`任务 ${i + 1}`} className={`flex h-6 w-full items-center border-b-2 border-[#333] ${i ? "bg-[#a0a0a0]" : "bg-[#eee]"}`}>
            <svg viewBox="-3 0 7 16" className="h-4 w-[7px]" fill="none">{t}</svg>
          </button>
        ))}
      </div>
      <SogouBar />
    </main>
  );
}

/* ---------- bottom bars ---------- */

const SNAPS: { d: string; dots: Pt[] }[] = [
  { d: "", dots: [[8, 8]] },
  { d: "M8 1A7 7 0 1 1 7.900 1Z", dots: [[8, 8]] },
  { d: "M1 15L15 1", dots: [[8, 8]] },
  { d: "M8 2A6 6 0 1 1 7.900 2Z", dots: [[8, 2], [8, 14], [2, 8], [14, 8]] },
  { d: "M1 1L15 15M1 14C7 13 8 3 15 2", dots: [[6, 6]] },
  { d: "M1 15L15 1M6 10L15 14", dots: [[6, 10]] },
];
const DIM = ["M3 1L15 13M6 7A4 4 0 1 1 5.900 7Z", "M2 6L8 12L14 3M5 9C6 6 10 7 9 12", "M1 2L12 14M5 1L16 13", "M2 15V2H16"];

const sunken = "border border-t-[#777] border-r-white border-b-white border-l-[#777]";

function BottomBars() {
  return (
    <footer className="shrink-0">
      <div className="flex h-[15px] bg-[#e6e6e6]">
        <div className="flex w-[190px] shrink-0 border-r border-b-2 border-[#222] bg-[#a6a6a6] text-[12px] leading-[13px]">
          {["M4 2V11M11 2L6 6.500L11 11Z", "M10 2L5 6.500L10 11Z", "M5 2L10 6.500L5 11Z", "M4 2L9 6.500L4 11ZM11 2V11"].map((d) => (
            <button key={d} aria-label="翻页" className="h-[13px] w-[17px] border-r border-[#ccc]">
              <svg viewBox="0 0 16 13" className="h-[13px] w-4" fill="#8a8a8a" stroke="#8a8a8a"><path d={d} /></svg>
            </button>
          ))}
          <button className="w-[46px] border-x border-[#222] bg-[#e6e6e6]">模型</button>
          <button className="flex-1 pr-2">运动算例 1</button>
        </div>
        <div className="flex-1 border-t border-black" />
      </div>
      <div className="flex h-[29px] items-center border-b-2 border-[#8a8a8a] bg-[#dadada]">
        <span className="ml-[6px] h-[22px] border-l-2 border-dotted border-[#444]" />
        <div className="ml-[10px] flex gap-[7px]">
          {SNAPS.map((s, i) => (
            <button key={i} aria-label={`捕捉 ${i + 1}`}>
              <Ico>
                <path d={s.d} stroke="#2a2a2a" strokeWidth="1.600" />
                {s.dots.map(([x, y]) => <circle key={`${x}-${y}`} cx={x} cy={y} r="2" fill="#e00000" />)}
              </Ico>
            </button>
          ))}
        </div>
        <div className="ml-[7px] h-5 w-px bg-[#888]" />
        <div className="ml-[6px] flex gap-[7px]">
          {DIM.map((d) => (
            <button key={d} aria-label="几何关系"><Ico><path d={d} stroke="#999" strokeWidth="1.600" /></Ico></button>
          ))}
          <button aria-label="水平竖直"><Ico><path d="M2 2H14M2 2V15" stroke="#222" strokeDasharray="2 2" /><circle cx="2" cy="2" r="2" fill="#e00000" /><circle cx="14" cy="2" r="2" fill="#333" /><circle cx="2" cy="14" r="2" fill="#333" /></Ico></button>
          <button aria-label="长度"><Ico><path d="M1 1V9M15 1V9M2 4H14M0 13H16" stroke="#999" strokeWidth="1.600" /></Ico></button>
          <button aria-label="网格"><Ico><path d="M3 2V15M7 2V15M11 2V15M15 2V15M0 4H16M0 8H16M0 12H16" stroke="#222" /><circle cx="7" cy="8" r="2.200" fill="#e00000" /></Ico></button>
          <button aria-label="角度"><Ico><path d="M13 2L2 14H15M8 8C11 9 11 12 11 14" stroke="#999" strokeWidth="1.600" /></Ico></button>
          <button aria-label="实体"><Ico><path d="M8 0L14 4V12L8 16L2 12V4Z" fill="#5a98f0" stroke="#1848a0" /><path d="M8 0L14 4L8 7L2 4Z" fill="#a8ccff" stroke="#1848a0" strokeWidth=".6" /><path d="M8 7V16" stroke="#1848a0" /></Ico></button>
          <button aria-label="基准面"><Ico><path d="M1 12L8 8L15 12L8 16Z" fill="#4a90e0" stroke="#184888" /><path d="M8 12V2M5 4L8 1L11 4" stroke="#222" strokeWidth="1.400" /></Ico></button>
          <button aria-label="测量"><MeasureIcon /></button>
        </div>
        <div className="ml-[10px] h-full w-px bg-[#888]" />
      </div>
      <div className={`flex h-[20px] items-center border-t border-white bg-[#cfcfcf] text-[12px] leading-[14px] whitespace-nowrap text-black ${TREE_FONT}`}>
        <p className="ml-px min-w-0 flex-1 overflow-hidden pt-[3px]">
          <span className="text-[10px]">SolidWorks Premium 2014 x64 </span>版
        </p>
        <span className="mr-[7px] h-4 w-1 bg-[#b4b4b4]" />
        <div className="flex shrink-0 gap-[2px]">
          <span className={`px-[3px] pt-[3px] ${sunken}`}>完全定义</span>
          <span className={`px-[3px] pt-[3px] ${sunken}`}>大型装配体模式</span>
          <span className={`px-[3px] pt-[3px] ${sunken}`}>在编辑<span className="text-[10px]"> </span>装配体</span>
        </div>
        <div className="ml-[3px] flex shrink-0 gap-[2px]">
          <span className={`h-[17px] w-[6px] ${sunken}`} />
          <span className={`h-[17px] w-[6px] ${sunken}`} />
        </div>
        <div className="relative ml-[3px] flex h-full w-[171px] shrink-0 items-center bg-[repeating-linear-gradient(90deg,#cfcfcf_0_4px,#bcbcbc_4px_8px)]">
          <button className="ml-[26px] h-[17px] bg-[#cfcfcf]">自定义</button>
          <svg viewBox="0 0 6 4" className="ml-[17px] h-1 w-[6px]"><path d="M0 4L3 0L6 4Z" fill="#333" /></svg>
          <button className="ml-[16px] flex h-[14px] w-[13px] items-center justify-center border border-[#2a4a80] bg-white text-[13px] leading-none font-bold text-[#008a10]">?</button>
          <svg viewBox="0 0 12 14" className="ml-auto h-[14px] w-[8px]"><path d="M1 7L8 1L12 4V12L8 14Z" fill="#f8d020" stroke="#8a6400" /></svg>
          {/* speed widget of the desktop, cut by the window edge */}
          <div className="absolute top-[11px] left-[40px] z-10 flex h-[20px] w-[102px] justify-center rounded-t-xl border border-[#b0b0b0] bg-[#f0f0f0] pt-[5px] pl-7 text-[10px] leading-none text-[#202050]">
            0K/s
          </div>
          <svg viewBox="0 0 46 46" className="absolute top-[6px] left-[18px] z-20 size-[46px]">
            <circle cx="23" cy="23" r="22" fill="#e8e8e8" stroke="#999" />
            <circle cx="23" cy="23" r="20" fill="#3c6454" />
            <path d="M5 15H41V40H5Z" fill="#4cf080" />
            <path d="M5 14C12 0 34 0 41 14Z" fill="#4a5852" stroke="#0a8050" />
            <ellipse cx="22" cy="7" rx="8" ry="3" fill="#d8dedb" opacity=".6" />
          </svg>
        </div>
      </div>
    </footer>
  );
}

export default function App() {
  return (
    <div className={`flex h-screen flex-col overflow-hidden rounded-tl-md border-t border-b border-l border-[#4a464a] bg-[#ece8ec] py-[3px] pl-[3px] ${UI_FONT}`}>
      <MenuBar />
      <Ribbon />
      <div className="flex min-h-0 flex-1">
        <FeaturePanel />
        <GraphicsArea />
      </div>
      <BottomBars />
    </div>
  );
}
